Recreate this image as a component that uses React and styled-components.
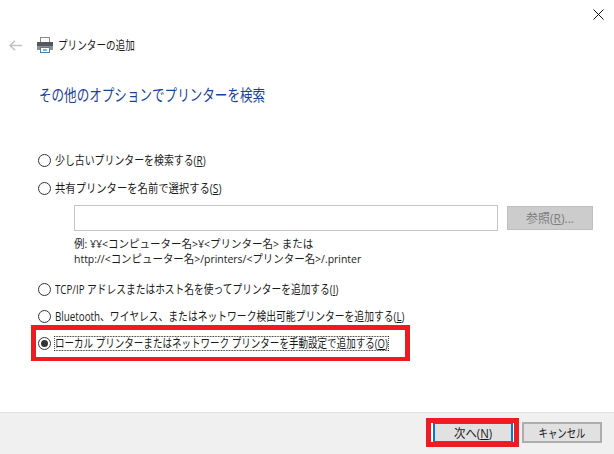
import React from 'react';
import styled, { createGlobalStyle } from 'styled-components';

const GlobalStyle = createGlobalStyle`
  html, body {
    margin: 0;
    padding: 0;
    background: #ffffff;
  }
  body {
    font-family: "Open Sans", "Noto Sans CJK JP", sans-serif;
    color: #1a1a1a;
  }
`;

const Window = styled.div`
  width: 614px;
  height: 454px;
  display: flex;
  flex-direction: column;
  overflow: hidden;
  background: #ffffff;
`;

const Main = styled.div`
  flex: 1;
  display: flex;
  flex-direction: column;
  min-height: 0;
`;

const CloseRow = styled.div`
  height: 35px;
  display: flex;
  justify-content: flex-end;
  padding: 9px 10px 0 0;
  box-sizing: border-box;
`;

const Header = styled.div`
  display: flex;
  align-items: center;
  height: 20px;
  padding-left: 9px;
`;

const Back = styled.span`
  display: flex;
  width: 28px;
`;

// kana in the original face is narrow, so text runs are condensed horizontally
const Narrow = styled.span`
  display: inline-block;
  white-space: nowrap;
  transform: scaleX(${p => p.$scale});
  transform-origin: ${p => p.$origin || 'left'} center;
`;

const HeaderTitle = styled(Narrow)`
  margin: 1px 0 0 5px;
  font-size: 12px;
  line-height: 20px;
`;

const Heading = styled(Narrow)`
  margin: 29px 0 0 39px;
  font-size: 16px;
  line-height: 22px;
  color: #1b3f9c;
`;

const Body = styled.div`
  display: flex;
  flex-direction: column;
  padding-left: 38px;
`;

const Option = styled.div`
  display: flex;
  align-items: center;
  height: 16px;
  margin-top: ${p => p.$gap}px;
  position: relative;
  &::after {
    content: ${p => (p.$marked ? '""' : 'none')};
    position: absolute;
    left: -7px;
    top: -10px;
    width: 379px;
    height: 36px;
    box-sizing: border-box;
    border: 5px solid #ed1c24;
    border-bottom-width: 4px;
  }
`;

const Radio = styled.span`
  width: 13px;
  height: 13px;
  box-sizing: border-box;
  border: 1px solid #333333;
  border-radius: 50%;
  flex: none;
  display: flex;
  align-items: center;
  justify-content: center;
  background: #ffffff;
  &::before {
    content: ${p => (p.$checked ? '""' : 'none')};
    width: 7px;
    height: 7px;
    border-radius: 50%;
    background: #333333;
  }
`;

const OptionText = styled(Narrow)`
  margin-left: 4px;
  font-size: 12px;
  line-height: 13px;
  outline: ${p => (p.$focused ? '1px dotted #222222' : 'none')};
`;

const NameRow = styled.div`
  display: flex;
  align-items: center;
  margin: 9px 0 0 36px;
`;

const NameInput = styled.div`
  width: 424px;
  height: 26px;
  box-sizing: border-box;
  border: 1px solid #c6c6c6;
  background: #ffffff;
`;

const BrowseButton = styled.div`
  width: 86px;
  height: 24px;
  margin-left: 9px;
  background: #cccccc;
  border: 1px solid #bfbfbf;
  box-sizing: border-box;
  color: #7d7d7d;
  font-size: 12px;
  display: flex;
  align-items: center;
  justify-content: center;
`;

const Example = styled.div`
  margin: 5px 0 0 36px;
  display: flex;
  flex-direction: column;
  align-items: flex-start;
  font-size: 11px;
  line-height: 15px;
`;

const Footer = styled.div`
  height: 42px;
  flex: none;
  box-sizing: border-box;
  background: #f0f0f0;
  border-top: 1px solid #dfdfdf;
  display: flex;
  justify-content: flex-end;
  align-items: flex-start;
  padding: 9px 12px 0 0;
  gap: 9px;
`;

const Button = styled.div`
  width: 80px;
  height: 21px;
  box-sizing: border-box;
  background: #e1e1e1;
  border: ${p => (p.$primary ? '2px solid #0078d7' : '2px solid #adadad')};
  box-shadow: ${p => (p.$primary ? '-2px 0 #ffffff, 1px 0 #ffffff' : 'none')};
  font-size: 12px;
  display: flex;
  align-items: center;
  justify-content: center;
  position: relative;
  &::after {
    content: ${p => (p.$marked ? '""' : 'none')};
    position: absolute;
    left: -9px;
    top: -6px;
    width: 93px;
    height: 29px;
    box-sizing: border-box;
    border: 5px solid #ed1c24;
  }
`;

const PrinterIcon = () => (
  <svg width="16" height="16" viewBox="0 0 16 16">
    <rect x="3.5" y="0.5" width="9" height="6" fill="#ffffff" stroke="#8a8a8a" />
    <rect x="0" y="5" width="16" height="4" fill="#55585c" />
    <rect x="0" y="9" width="16" height="4" fill="#8c9094" />
    <rect x="3.5" y="10.5" width="9" height="5" fill="#ffffff" stroke="#4a7fa8" />
    <rect x="6" y="12" width="4" height="2" fill="#7fb6dc" />
  </svg>
);

export default function App() {
  return (
    <>
      <GlobalStyle />
      <Window>
        <Main>
          <CloseRow>
            <svg width="11" height="11" viewBox="0 0 11 11">
              <path d="M0.5 0.5 L10.5 10.5 M10.5 0.5 L0.5 10.5" stroke="#111111" fill="none" />
            </svg>
          </CloseRow>
          <Header>
            <Back>
              <svg width="13" height="11" viewBox="0 0 13 11">
                <path d="M6 0.7 L1 5.5 L6 10.3 M1 5.5 H13" stroke="#c2c2c2" strokeWidth="1.5" fill="none" />
              </svg>
            </Back>
            <PrinterIcon />
            <HeaderTitle $scale={0.8}>プリンターの追加</HeaderTitle>
          </Header>
          <div>
            <Heading $scale={0.785}>その他のオプションでプリンターを検索</Heading>
          </div>
          <Body>
            <Option $gap={46}>
              <Radio />
              <OptionText $scale={0.825}>少し古いプリンターを検索する(<u>R</u>)</OptionText>
            </Option>
            <Option $gap={12}>
              <Radio />
              <OptionText $scale={0.86}>共有プリンターを名前で選択する(<u>S</u>)</OptionText>
            </Option>
            <NameRow>
              <NameInput />
              <BrowseButton>参照(<u>R</u>)...</BrowseButton>
            </NameRow>
            <Example>
              <Narrow $scale={0.955}>例: ¥¥&lt;コンピューター名&gt;¥&lt;プリンター名&gt; または</Narrow>
              <Narrow $scale={0.95}>http://&lt;コンピューター名&gt;/printers/&lt;プリンター名&gt;/.printer</Narrow>
            </Example>
            <Option $gap={15}>
              <Radio />
              <OptionText $scale={0.811}>TCP/IP アドレスまたはホスト名を使ってプリンターを追加する(<u>I</u>)</OptionText>
            </Option>
            <Option $gap={11}>
              <Radio />
              <OptionText $scale={0.816}>Bluetooth、ワイヤレス、またはネットワーク検出可能プリンターを追加する(<u>L</u>)</OptionText>
            </Option>
            <Option $gap={11} $marked>
              <Radio $checked />
              <OptionText $scale={0.795} $focused>ローカル プリンターまたはネットワーク プリンターを手動設定で追加する(<u>O</u>)</OptionText>
            </Option>
          </Body>
        </Main>
        <Footer>
          <Button $primary $marked><Narrow $scale={0.95} $origin="center">次へ(<u>N</u>)</Narrow></Button>
          <Button><Narrow $scale={0.78} $origin="center">キャンセル</Narrow></Button>
        </Footer>
      </Window>
    </>
  );
}
